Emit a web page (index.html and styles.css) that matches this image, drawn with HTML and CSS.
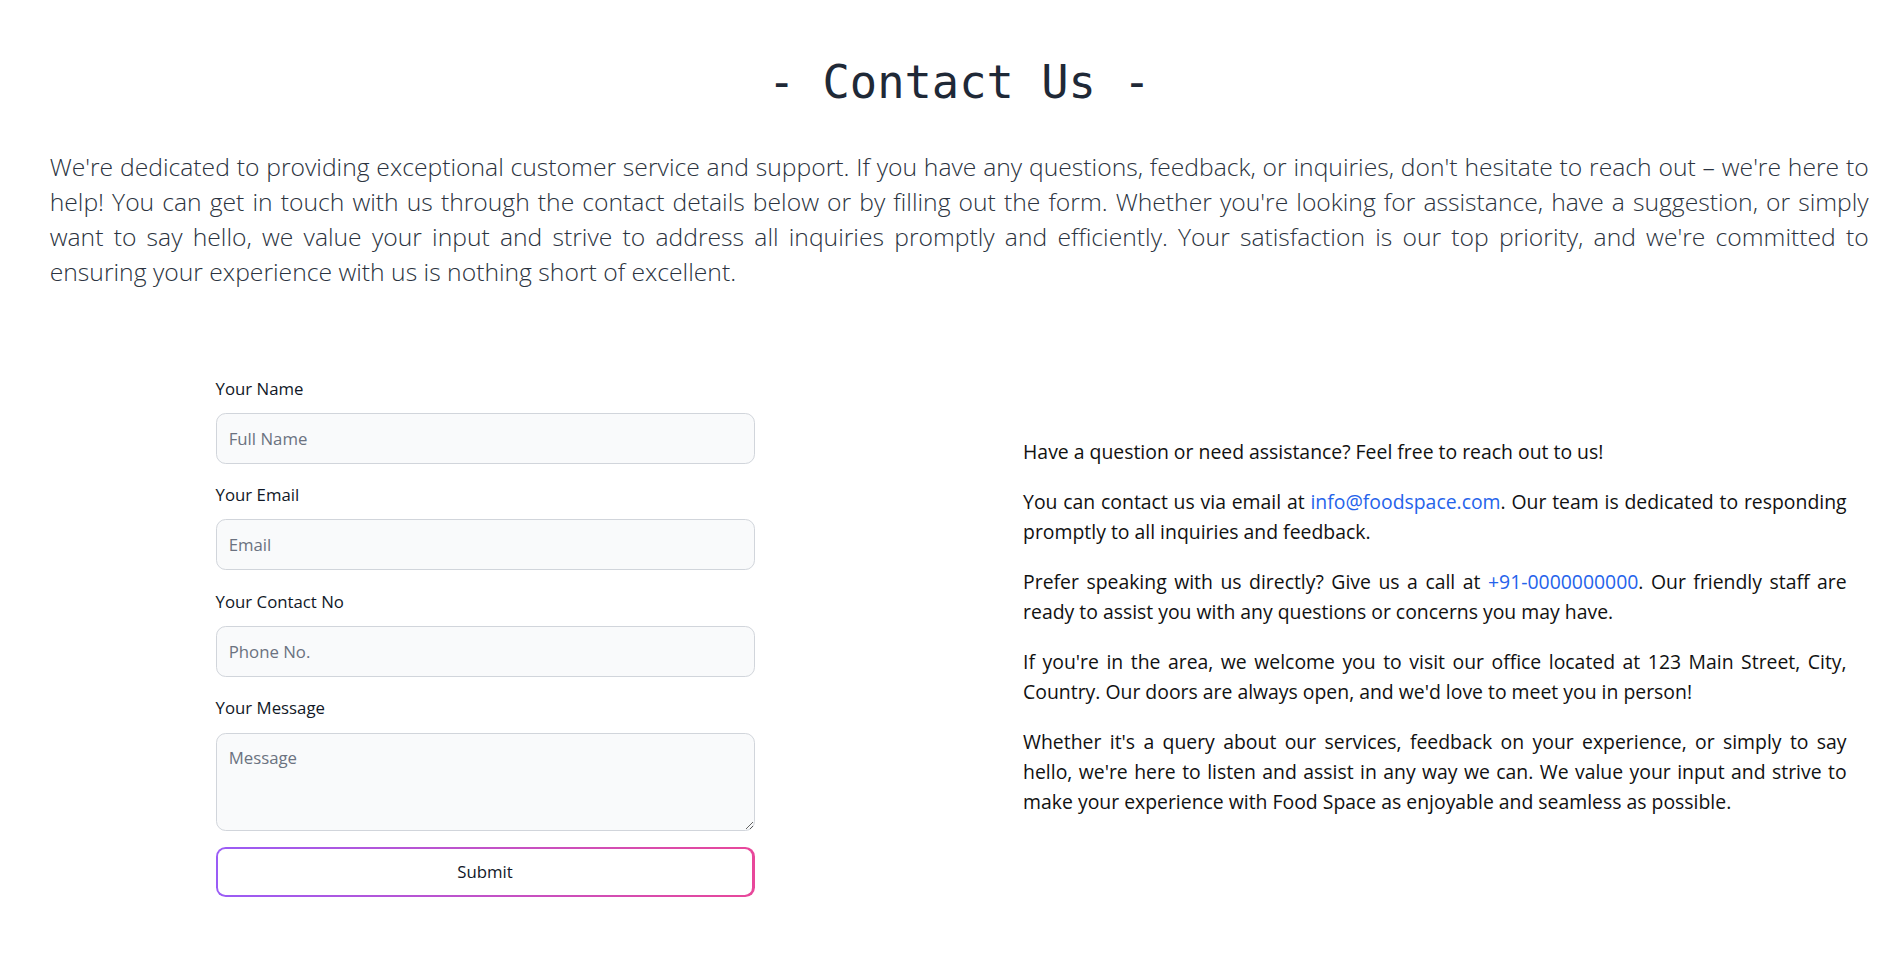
FILE: index.html
```html
<!DOCTYPE html>
<html lang="en">
<head>
<meta charset="utf-8">
<title>Contact Us</title>
<link rel="stylesheet" href="styles.css">
</head>
<body>
<main class="page">
  <h1 class="title">- Contact Us -</h1>
  <p class="intro">We're dedicated to providing exceptional customer service and support. If you have any questions, feedback, or inquiries, don't hesitate to reach out – we're here to help! You can get in touch with us through the contact details below or by filling out the form. Whether you're looking for assistance, have a suggestion, or simply want to say hello, we value your input and strive to address all inquiries promptly and efficiently. Your satisfaction is our top priority, and we're committed to ensuring your experience with us is nothing short of excellent.</p>

  <section class="contact">
    <form class="form">
      <div class="field">
        <label class="label" for="name">Your Name</label>
        <input class="input" id="name" type="text" placeholder="Full Name">
      </div>
      <div class="field">
        <label class="label" for="email">Your Email</label>
        <input class="input" id="email" type="email" placeholder="Email">
      </div>
      <div class="field">
        <label class="label" for="phone">Your Contact No</label>
        <input class="input" id="phone" type="tel" placeholder="Phone No.">
      </div>
      <div class="field field-last">
        <label class="label" for="msg">Your Message</label>
        <textarea class="input textarea" id="msg" rows="3" placeholder="Message"></textarea>
      </div>
      <button class="submit" type="button"><span class="submit-inner">Submit</span></button>
    </form>

    <div class="info">
      <p>Have a question or need assistance? Feel free to reach out to us!</p>
      <p><span>You can contact us via email at </span><a class="link" href="#">info@foodspace.com</a><span>. Our team is dedicated to responding</span> <span>promptly to all inquiries and feedback.</span></p>
      <p><span>Prefer speaking with us directly? Give us a call at </span><a class="link" href="#">+91-0000000000</a><span>. Our friendly staff are</span> <span>ready to assist you with any questions or concerns you may have.</span></p>
      <p>If you're in the area, we welcome you to visit our office located at 123 Main Street, City, Country. Our doors are always open, and we'd love to meet you in person!</p>
      <p>Whether it's a query about our services, feedback on your experience, or simply to say hello, we're here to listen and assist in any way we can. We value your input and strive to make your experience with Food Space as enjoyable and seamless as possible.</p>
    </div>
  </section>
</main>
</body>
</html>
```

FILE: styles.css
```css
html, body {
  margin: 0;
  padding: 0;
  background: #ffffff;
}

body {
  font-family: "Open Sans", "Noto Sans", sans-serif;
}

.page {
  padding: 0 30.3px 48px 49.7px;
}

.title {
  margin: 0;
  padding-top: 58.1px;
  text-align: center;
  font-family: "DejaVu Sans Mono", "Liberation Mono", monospace;
  font-size: 45.4px;
  line-height: 49.7px;
  font-weight: 400;
  color: #1f2937;
}

.intro {
  margin: 41.2px 0 0;
  font-family: "Open Sans", "Noto Sans", sans-serif;
  font-weight: 300;
  font-size: 24.7px;
  line-height: 35.1px;
  color: #2b3340;
  text-align: justify;
}

.contact {
  display: flex;
  align-items: center;
  margin-top: 87.2px;
}

.form {
  margin-left: 165.9px;
  width: 539px;
  flex: none;
}

.field {
  margin-bottom: 19.4px;
}

.field-last {
  margin-bottom: 16px;
}

.label {
  display: block;
  margin-bottom: 12.1px;
  font-size: 16.8px;
  line-height: 24.2px;
  font-weight: 500;
  color: #111827;
}

.input {
  display: block;
  box-sizing: border-box;
  width: 100%;
  height: 50.9px;
  padding: 12.1px;
  border: 1px solid #d1d5db;
  border-radius: 9.7px;
  background: #f9fafb;
  font-family: "Open Sans", "Noto Sans", sans-serif;
  font-size: 16.8px;
  line-height: 24.2px;
  color: #111827;
  outline: none;
}

.input::placeholder {
  color: #6b7280;
}

.textarea {
  height: 98.1px;
  resize: vertical;
}

.submit {
  display: block;
  box-sizing: border-box;
  width: 100%;
  padding: 2.4px;
  border: none;
  border-radius: 9.7px;
  background: linear-gradient(90deg, #9a5cf6 0%, #e8479a 100%);
  cursor: pointer;
}

.submit-inner {
  display: block;
  padding: 10.9px 24.2px;
  border-radius: 7.3px;
  background: #ffffff;
  font-family: "Open Sans", "Noto Sans", sans-serif;
  font-size: 16.8px;
  line-height: 24.2px;
  font-weight: 500;
  color: #111827;
}

.info {
  margin-left: 268.5px;
  width: 823.5px;
  flex: none;
  font-size: 19.4px;
  line-height: 30.3px;
  font-weight: 500;
  color: #111111;
  text-align: justify;
}

.info p {
  margin: 0 0 19.4px;
}

.link {
  color: #2563eb;
  text-decoration: none;
}
```
